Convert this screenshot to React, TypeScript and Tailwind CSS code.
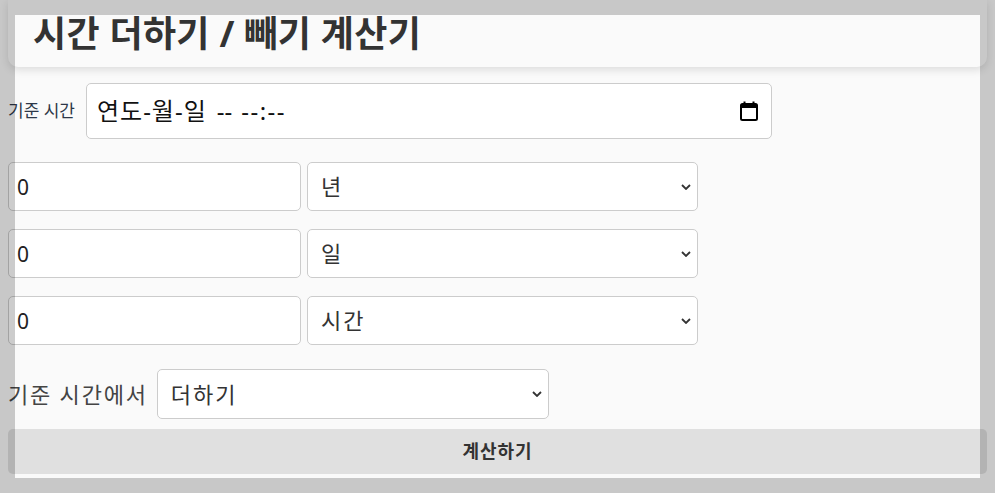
import { useState } from 'react'

const font = { fontFamily: '"Noto Sans", "Noto Sans CJK KR", sans-serif' }

function Chevron() {
  return (
    <svg
      width="10"
      height="6"
      viewBox="0 0 10 6"
      className="pointer-events-none absolute right-[7px] top-1/2 -translate-y-1/2"
    >
      <path d="M1 1l4 4 4-4" fill="none" stroke="#333" strokeWidth="1.8" />
    </svg>
  )
}

function CalendarIcon() {
  return (
    <svg width="18" height="20" viewBox="0 0 18 20">
      <rect x="1" y="3" width="16" height="16" rx="1.5" fill="none" stroke="#000" strokeWidth="2" />
      <rect x="1" y="3" width="16" height="4" fill="#000" />
      <rect x="3.5" y="0.5" width="2" height="4" fill="#000" />
      <rect x="12.5" y="0.5" width="2" height="4" fill="#000" />
    </svg>
  )
}

function Select({
  value,
  options,
  onChange,
  className,
}: {
  value: string
  options: string[]
  onChange: (v: string) => void
  className: string
}) {
  return (
    <div className={`relative ${className}`}>
      <select
        value={value}
        onChange={(e) => onChange(e.target.value)}
        className="h-full w-full appearance-none rounded-[5px] border border-[#cccccc] bg-white pl-[13px] text-[22px] tracking-[2px] text-[#333]"
      >
        {options.map((o) => (
          <option key={o}>{o}</option>
        ))}
      </select>
      <Chevron />
    </div>
  )
}

function AmountRow({ unit, units }: { unit: string; units: string[] }) {
  const [amount, setAmount] = useState('0')
  const [u, setU] = useState(unit)
  return (
    <div className="flex gap-[6px]">
      <input
        type="number"
        value={amount}
        onChange={(e) => setAmount(e.target.value)}
        className="h-[49px] w-[293px] rounded-[5px] border border-[#cccccc] bg-white pl-[8px] text-[21px] text-[#222]"
      />
      <Select value={u} options={units} onChange={setU} className="h-[49px] w-[391px]" />
    </div>
  )
}

export default function App() {
  const [mode, setMode] = useState('더하기')
  const units = ['년', '월', '일', '시간', '분']

  return (
    <div className="min-h-screen bg-[#fafafa] px-2" style={font}>
      {/* Header */}
      <div className="h-[67px] rounded-b-[10px] bg-[#fafafa] pl-[25px] pt-[10px] shadow-[0_3px_8px_rgba(0,0,0,0.12)]">
        <h1 className="text-[36px] font-bold leading-[48px] tracking-[0.3px] text-[#333]">
          시간 더하기 / 빼기 계산기
        </h1>
      </div>

      {/* Base time */}
      <div className="mt-4 flex items-center gap-[11px]">
        <label className="text-[17px] text-[#2d3748]">기준 시간</label>
        <div className="flex h-[56px] w-[686px] items-center justify-between rounded-[5px] border border-[#cccccc] bg-white pl-[10px] pr-[13px]">
          <div className="flex items-center text-[24px] text-[#111]">
            <span className="tracking-[1px]">연도-월-일</span>
            <span className="ml-[10px]">--</span>
            <span className="ml-[9px] tracking-[1.5px]">--:--</span>
          </div>
          <CalendarIcon />
        </div>
      </div>

      <div className="mt-[23px] flex flex-col gap-[18px]">
        <AmountRow unit="년" units={units} />
        <AmountRow unit="일" units={units} />
        <AmountRow unit="시간" units={units} />
      </div>

      <div className="mt-[24px] flex items-center gap-[9px]">
        <span className="text-[22px] tracking-[1.8px] text-[#444]">기준 시간에서</span>
        <Select
          value={mode}
          options={['더하기', '빼기']}
          onChange={setMode}
          className="h-[50px] w-[392px]"
        />
      </div>

      <button className="mt-[10px] h-[45px] w-full rounded-[5px] bg-black/10 text-[18px] font-bold tracking-[1px] text-[#333]">
        계산하기
      </button>

      {/* Frame overlay */}
      <div className="pointer-events-none fixed inset-0 border-[15px] border-black/20" />
    </div>
  )
}
